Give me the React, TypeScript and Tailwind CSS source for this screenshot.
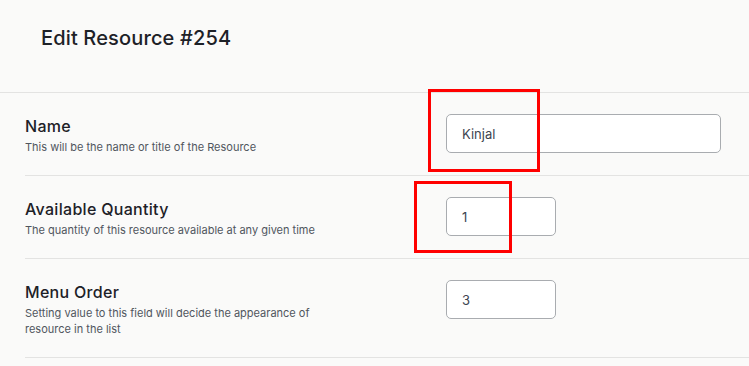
import React from 'react'

type Field = {
  label: string
  help: string
  value: string
  wide?: boolean
}

const FIELDS: Field[] = [
  { label: 'Name', help: 'This will be the name or title of the Resource', value: 'Kinjal', wide: true },
  { label: 'Available Quantity', help: 'The quantity of this resource available at any given time', value: '1' },
  { label: 'Menu Order', help: 'Setting value to this field will decide the appearance of resource in the list', value: '3' },
]

export default function App() {
  return (
    <div className="relative min-h-[366px] w-[749px] bg-[#fafaf9] font-['Inter','Noto_Sans',sans-serif] text-[#1d2127]">
      {/* Header */}
      <div className="h-[93px] border-b border-[#e3e3e2] pl-[41px] pt-[26px]">
        <h1 className="text-[20px] font-medium leading-[24px] tracking-[0.15px]">Edit Resource #254</h1>
      </div>

      {/* Form rows */}
      <div className="pl-[25px]">
        {FIELDS.map((f) => (
          <div key={f.label} className="flex items-start border-b border-[#e3e3e2] pt-[21px] pb-[20px]">
            <div className="w-[421px] pt-[2px]">
              <div className="text-[16px] font-medium leading-[21px] tracking-[0.3px]">{f.label}</div>
              <p className="mt-[2px] max-w-[300px] text-[11px] leading-[16px] text-[#50565e]">{f.help}</p>
            </div>
            <input
              type="text"
              defaultValue={f.value}
              className={`h-[39px] rounded-[5px] border border-[#a9acb0] bg-white px-[15px] text-[13px] text-[#3d4550] outline-none ${
                f.wide ? 'w-[275px]' : 'w-[110px]'
              }`}
            />
          </div>
        ))}
      </div>

      {/* Annotation boxes */}
      <div className="absolute left-[428px] top-[89px] h-[83px] w-[112px] border-[3px] border-[#ff0000]" />
      <div className="absolute left-[414px] top-[181px] h-[72px] w-[98px] border-[3px] border-[#ff0000]" />
    </div>
  )
}
